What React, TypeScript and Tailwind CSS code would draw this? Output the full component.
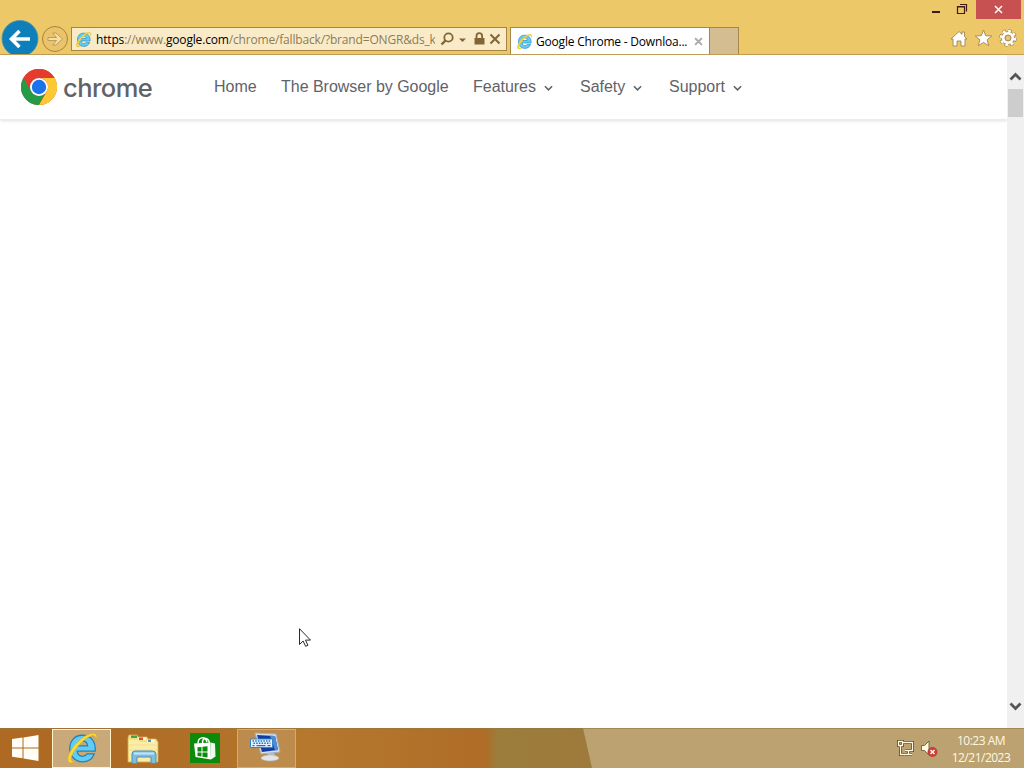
import type { ReactNode } from 'react';

const navLinks = [
  { label: 'Home', width: 'w-[43px]', gap: 'ml-[62px]', menu: false },
  { label: 'The Browser by Google', width: 'w-[168px]', gap: 'ml-[24px]', menu: false },
  { label: 'Features', width: 'w-[63px]', gap: 'ml-[24px]', menu: true },
  { label: 'Safety', width: 'w-[45px]', gap: 'ml-[27px]', menu: true },
  { label: 'Support', width: 'w-[56px]', gap: 'ml-[27px]', menu: true },
];

function IeIcon({ className }: { className: string }) {
  return (
    <svg viewBox="0 0 32 32" className={className}>
      <path
        d="M16 4C9 4 4.500 9.500 4.500 16.500S9.500 29 16.500 29c5.500 0 9.500-3 11-7.500h-6.700c-.9 1.500-2.300 2.300-4.300 2.300-3 0-4.800-1.900-5-4.900h16.900C29.200 10 24.500 4 16 4zm-4.400 10.100c.5-2.900 2.200-4.700 4.900-4.700 2.600 0 4.500 1.700 4.800 4.700z"
        fill="#62cdf4"
        stroke="#2382b8"
        strokeWidth="1.200"
      />
      <path
        d="M29.500 8.500c1-3.500.3-6-2.500-6.300C20.500 1.500 9 11 4.500 20 1.800 25.500 2 30 5.500 30c1.500 0 3.300-.8 5-2-3.700 1-5 .1-4.700-2.200C6.500 20 17 7.500 24.500 4.700c3-1.100 4.500.3 5 3.800z"
        fill="#f9d93c"
        stroke="#d0a41f"
        strokeWidth=".5"
      />
    </svg>
  );
}

function NavButtons() {
  return (
    <svg viewBox="0 0 71 54" className="h-[54px] w-[71px] shrink-0">
      <circle cx="20" cy="38.500" r="18" fill="#0d7fbb" stroke="#5391a5" strokeWidth=".8" />
      <path d="M30 39H11.500M19.500 31l-8 8 8 8" fill="none" stroke="#fff" strokeWidth="3.600" />
      <circle cx="55" cy="39" r="12.500" fill="#eac46b" stroke="#a9833b" />
      <path
        d="M48 37.500h8.500l-3.800-4.500h3.300l6.500 6-6.500 6h-3.300l3.800-4.500H48z"
        fill="#f6dfa5"
        stroke="#b18d49"
        strokeWidth=".8"
      />
    </svg>
  );
}

function AddressBar() {
  return (
    <div className="mt-[27px] flex h-6 w-[436px] shrink-0 items-center border border-[#a68442] bg-[#faebc8]">
      <IeIcon className="ml-[3px] h-[17px] w-[17px] shrink-0" />
      <div className="ml-1 h-[22px] w-[339px] overflow-hidden whitespace-nowrap pt-[1px] font-['Open_Sans','Noto_Sans',sans-serif] text-[12px] leading-[22px] tracking-[-0.170px] text-[#8d7b56]">
        <span className="text-black">https</span>://www.
        <span className="text-black">google.com</span>/chrome/fallback/?brand=ONGR&amp;ds_k
      </div>
      <svg viewBox="-3 0 71 22" className="h-[22px] w-[71px] shrink-0 text-[#816634]">
        <circle cx="10.500" cy="9.500" r="4.200" fill="none" stroke="currentColor" strokeWidth="1.800" />
        <path d="M7.500 12.500l-4 4" stroke="currentColor" strokeWidth="2.400" />
        <path d="M21 10.500h7l-3.500 3.500z" fill="currentColor" />
        <path d="M38.500 10V8a2.800 2.800 0 0 1 5.600 0v2" fill="none" stroke="currentColor" strokeWidth="1.800" />
        <path d="M36.500 10h10v6.500h-10z" fill="currentColor" />
        <path d="M52.500 6.500l9 9M61.500 6.500l-9 9" stroke="currentColor" strokeWidth="2" />
      </svg>
    </div>
  );
}

function Tabs() {
  return (
    <div className="mt-[27px] ml-[3px] flex h-[27px] shrink-0">
      <div className="flex w-[200px] items-center border border-b-0 border-[#a3874d] bg-white">
        <IeIcon className="ml-[5px] h-[17px] w-[17px] shrink-0" />
        <span className="ml-[3px] w-[153px] whitespace-nowrap pt-[2px] font-['Open_Sans','Noto_Sans',sans-serif] text-[12px] tracking-[-0.200px] text-black">
          Google Chrome - Downloa...
        </span>
        <svg viewBox="0 0 10 10" className="ml-[5px] h-[9px] w-[9px]">
          <path d="M1.200 1.200l7.600 7.600M8.800 1.200L1.200 8.800" stroke="#aaa" strokeWidth="2.200" />
        </svg>
      </div>
      <div className="w-[29px] border-t border-r border-[#a3874d] bg-[#d4bd91]" />
    </div>
  );
}

function WindowControls() {
  return (
    <div className="ml-auto flex w-[110px] shrink-0 flex-col">
      <div className="flex h-[19px] items-start">
        <svg viewBox="0 0 62 19" className="h-[19px] w-[62px]">
          <path d="M18 12h8" stroke="#421b10" strokeWidth="2" />
          <path d="M43.500 6.500h7v7h-7zM43 7h8M46 4.500h6.500v7" fill="none" stroke="#421b10" strokeWidth="1.200" />
        </svg>
        <div className="flex h-[19px] w-[45px] items-center justify-center bg-[#c75050]">
          <svg viewBox="0 0 9 9" className="h-[9px] w-[9px]">
            <path d="M1 1l7 7M8 1L1 8" stroke="#fff" strokeWidth="1.500" />
          </svg>
        </div>
      </div>
      <svg viewBox="0 0 110 35" className="h-[35px] w-[110px]" stroke="#a28450" strokeWidth=".9">
        <path d="M37 20l8-7.500 3 2.800V13h2.500v4.700L53 20h-2v7h-4v-5h-4v5h-4v-7z" fill="#fff" />
        <path d="M69.500 11l2.200 5.700 6.100.3-4.700 3.800 1.600 5.900-5.200-3.300-5.200 3.300 1.600-5.900-4.700-3.800 6.100-.3z" fill="#fff" />
        <circle cx="94" cy="19" r="6.800" fill="none" stroke="#a28450" strokeWidth="4" strokeDasharray="3.200 2.140" />
        <circle cx="94" cy="19" r="5" fill="none" stroke="#a28450" strokeWidth="3.600" />
        <circle cx="94" cy="19" r="6.800" fill="none" stroke="#fff" strokeWidth="2.800" strokeDasharray="2.600 2.740" />
        <circle cx="94" cy="19" r="4.700" fill="none" stroke="#fff" strokeWidth="2.800" />
        <circle cx="94" cy="19" r="2.900" fill="#e8c571" />
      </svg>
    </div>
  );
}

function ChromeLogo() {
  return (
    <svg viewBox="0 0 36 36" className="ml-[21px] h-9 w-9 shrink-0">
      <circle cx="18" cy="18" r="18" fill="#e33b2e" />
      <path d="M18 18H9.700L2.410 9A18 18 0 0 0 18 36l7.200-13.800z" fill="#259b48" />
      <path d="M18 9h15.590A18 18 0 0 1 18 36l7.800-13.500A9 9 0 0 0 18 9z" fill="#fcc934" />
      <path d="M2.410 9A18 18 0 0 1 33.590 9H18a9 9 0 0 0-7.800 13.500z" fill="#e33b2e" />
      <circle cx="18" cy="18" r="9" fill="#fff" />
      <circle cx="18" cy="18" r="7.200" fill="#1a73e8" />
    </svg>
  );
}

function SiteHeader() {
  return (
    <header className="flex h-[65px] items-center border-b border-[#ececec] bg-white shadow-[0_1px_3px_rgba(0,0,0,0.120)]">
      <ChromeLogo />
      <span className="ml-[6px] w-[89px] pt-[1px] font-['Inter',sans-serif] text-[25.500px] leading-none font-medium tracking-[-0.550px] text-[#5f6368]">
        chrome
      </span>
      {navLinks.map((link) => (
        <a
          key={link.label}
          className={`flex items-center whitespace-nowrap font-['Liberation_Sans',sans-serif] text-[16px] tracking-[-0.020px] text-[#5f6368] ${link.gap}`}
        >
          <span className={link.width}>{link.label}</span>
          {link.menu && (
            <svg viewBox="0 0 10 6" className="mt-[2px] ml-[8px] h-[6px] w-[9px]">
              <path d="M1 1l4 4 4-4" fill="none" stroke="#5f6368" strokeWidth="1.700" />
            </svg>
          )}
        </a>
      ))}
    </header>
  );
}

function Scrollbar() {
  return (
    <div className="flex w-[17px] shrink-0 flex-col items-center bg-[#f0f0f0]">
      <svg viewBox="0 0 17 34" className="h-[34px] w-[17px]">
        <path d="M3.500 24.500l5-5 5 5" fill="none" stroke="#555" strokeWidth="2.700" />
      </svg>
      <div className="h-[28px] w-[15px] bg-[#cdcdcd]" />
      <svg viewBox="0 0 17 34" className="mt-auto h-[34px] w-[17px]">
        <path d="M3.500 9.500l5 5 5-5" fill="none" stroke="#555" strokeWidth="2.700" />
      </svg>
    </div>
  );
}

function TaskButton({ className, children }: { className: string; children: ReactNode }) {
  return <div className={`flex h-[39px] shrink-0 items-center justify-center ${className}`}>{children}</div>;
}

function Taskbar() {
  return (
    <footer className="relative flex h-10 shrink-0 items-end bg-[#bba270]">
      {/* wallpaper tint behind the buttons */}
      <svg viewBox="0 0 1024 40" className="absolute inset-0 h-10 w-full">
        <defs>
          <linearGradient id="tint" x1="0" x2="1">
            <stop offset="0" stopColor="#ae6922" />
            <stop offset=".2" stopColor="#ae6b24" />
            <stop offset=".52" stopColor="#b5782d" />
            <stop offset=".82" stopColor="#af6d27" />
            <stop offset=".84" stopColor="#9c7d3b" />
            <stop offset="1" stopColor="#9e7a3b" />
          </linearGradient>
        </defs>
        <path d="M0 0h583l9 40H0z" fill="url(#tint)" />
        <path d="M0 .5h1024" stroke="#967645" opacity=".6" />
      </svg>
      <div className="relative flex w-full items-end">
        <TaskButton className="w-[52px] pr-[3px] pb-[1px]">
          <svg viewBox="0 0 28 28" className="h-7 w-7" fill="#fffdf5">
            <path d="M1 5l10.500-1.500v10H1zM12.500 3.400L27.500 1v12.500h-15zM1 14.500h10.500v9.800L1 22.800zM12.500 14.500h15V27l-15-2.500z" />
          </svg>
        </TaskButton>
        <TaskButton className="w-[59px] border border-[#fff2cb] bg-[#c9a979]">
          <IeIcon className="mb-[2px] h-[34px] w-[34px]" />
        </TaskButton>
        <TaskButton className="ml-[15px] w-[34px]">
          <svg viewBox="0 0 34 34" className="h-[34px] w-[34px]">
            <path d="M2 6l1-3h8l1 2h9l1 2h8l2 3v20H2z" fill="#f4df86" stroke="#d9ba62" strokeWidth=".7" />
            <path d="M5 3.500h6v2.500H5z" fill="#3fa44a" />
            <path d="M12 5.500h8v2.500h-8z" fill="#fff5d2" />
            <path d="M13 5.500h4v2.500h-4z" fill="#df4c38" />
            <path d="M21 7.500h8v2.500h-8z" fill="#fff5d2" />
            <path d="M22 7.500h3v2.500h-3z" fill="#4b94c9" />
            <path d="M3 8h9l2 2h17v19H3z" fill="#faeda8" />
            <path d="M3 13h28M3 18h28" stroke="#f1df91" />
            <path d="M6 31.500V22q0-3 3-3h17q4 0 4 3v9.500h-5V25H11v6.500z" fill="#80bddf" stroke="#4f91b8" />
            <path d="M8 21.500h20" stroke="#c1e7f7" strokeWidth="2" />
          </svg>
        </TaskButton>
        <TaskButton className="ml-[30px] w-[30px]">
          <svg viewBox="0 0 30 30" className="mb-[2px] h-[30px] w-[30px]">
            <path d="M0 0h30v30H0z" fill="#0b8a0b" />
            <path d="M4 10.500l16.500-1 .5 17L5.500 24z" fill="#fff" />
            <path d="M20.500 9.500l4.500 1 .5 13-4.500 3z" fill="#eef8ec" />
            <path d="M8 10.500c0-6.500 7-8 9-1.500M12.500 10c0-6 5.500-6 7 0" fill="none" stroke="#fff" strokeWidth="1.500" />
            <path d="M7.500 14.300l4-.4v4.600h-4zM12.500 13.800l5-.6v5.300h-5zM7.500 19.400h4v4.200l-4-.5zM12.500 19.400h5v5l-5-.7z" fill="#0b8a0b" />
          </svg>
        </TaskButton>
        <TaskButton className="ml-[17px] w-[59px] border border-[#d1ad75] bg-[#bd8b4b]">
          <svg viewBox="0 0 34 34" className="mr-[2px] mb-[3px] h-[34px] w-[34px]">
            <path d="M6 3l21 1 4 18-19 2z" fill="#d7e1e9" stroke="#a2b1c0" />
            <path d="M8 5l18 1 3 14-16 2z" fill="#163c9f" />
            <path d="M21 5.800l5 .2 3 14-3 .3z" fill="#5789d1" />
            <path d="M18 23l7-1 1 4-6 1z" fill="#b6bdc8" />
            <ellipse cx="21" cy="28" rx="9" ry="3" fill="#e2e4e5" stroke="#b4b7bc" strokeWidth=".6" />
            <path d="M1.500 9h22v8.500h-22z" fill="#e7f4ff" stroke="#3187cf" />
            <path d="M3.500 11h18M4.500 13.300h17" stroke="#1870c0" strokeWidth="1.400" strokeDasharray="1.500 1.200" />
            <path d="M3.500 15.600h2M7.500 15.600h9M18.500 15.600h3" stroke="#1870c0" strokeWidth="1.300" />
          </svg>
        </TaskButton>
        <div className="ml-auto flex h-10 items-center text-[#fff8e3]">
          <svg viewBox="0 0 42 20" className="h-5 w-[42px]">
            <g fill="none" stroke="#604922" strokeWidth="3">
              <path d="M6 4.500h9.500v8H8M11.500 13v3M7 16.500h8" />
              <path d="M1.500 3.500h4v4h-4zM3.500 8v8.500h4" />
            </g>
            <g fill="none" stroke="currentColor" strokeWidth="1.300">
              <path d="M6 4.500h9.500v8H8M11.500 13v3M7 16.500h8" />
              <path d="M1.500 3.500h4v4h-4zM3.500 8v8.500h4" />
            </g>
            <path d="M24.500 7.500h3L32 3v14l-4.500-4.500h-3z" fill="currentColor" stroke="#715a31" strokeWidth=".9" />
            <circle cx="35.500" cy="14" r="4.700" fill="#cf3d36" stroke="#9a4030" strokeWidth=".5" />
            <path d="M33.500 12l4 4M37.500 12l-4 4" stroke="#fff" strokeWidth="1.400" />
          </svg>
          <div className="mr-[13px] ml-[12px] w-[60px] whitespace-nowrap pt-[2px] text-center font-['Open_Sans','Noto_Sans',sans-serif] text-[12px] leading-[17px] tracking-[-0.500px]">
            <div>10:23 AM</div>
            <div>12/21/2023</div>
          </div>
        </div>
      </div>
    </footer>
  );
}

export default function App() {
  return (
    <div className="relative flex h-screen w-full flex-col overflow-hidden bg-white">
      <div className="flex h-[55px] shrink-0 items-start border-b border-[#c5a057] bg-[#edc869]">
        <NavButtons />
        <AddressBar />
        <Tabs />
        <WindowControls />
      </div>
      <div className="flex min-h-0 flex-1">
        <main className="min-w-0 flex-1">
          <SiteHeader />
        </main>
        <Scrollbar />
      </div>
      <Taskbar />
      {/* mouse pointer */}
      <svg viewBox="0 0 12 19" className="absolute top-[628px] left-[299px] h-[19px] w-3">
        <path d="M.5.700v15.800l3.600-3.500 2.500 5.300 2.300-1-2.400-5.200h5z" fill="#fff" stroke="#111" strokeWidth=".9" />
      </svg>
    </div>
  );
}
